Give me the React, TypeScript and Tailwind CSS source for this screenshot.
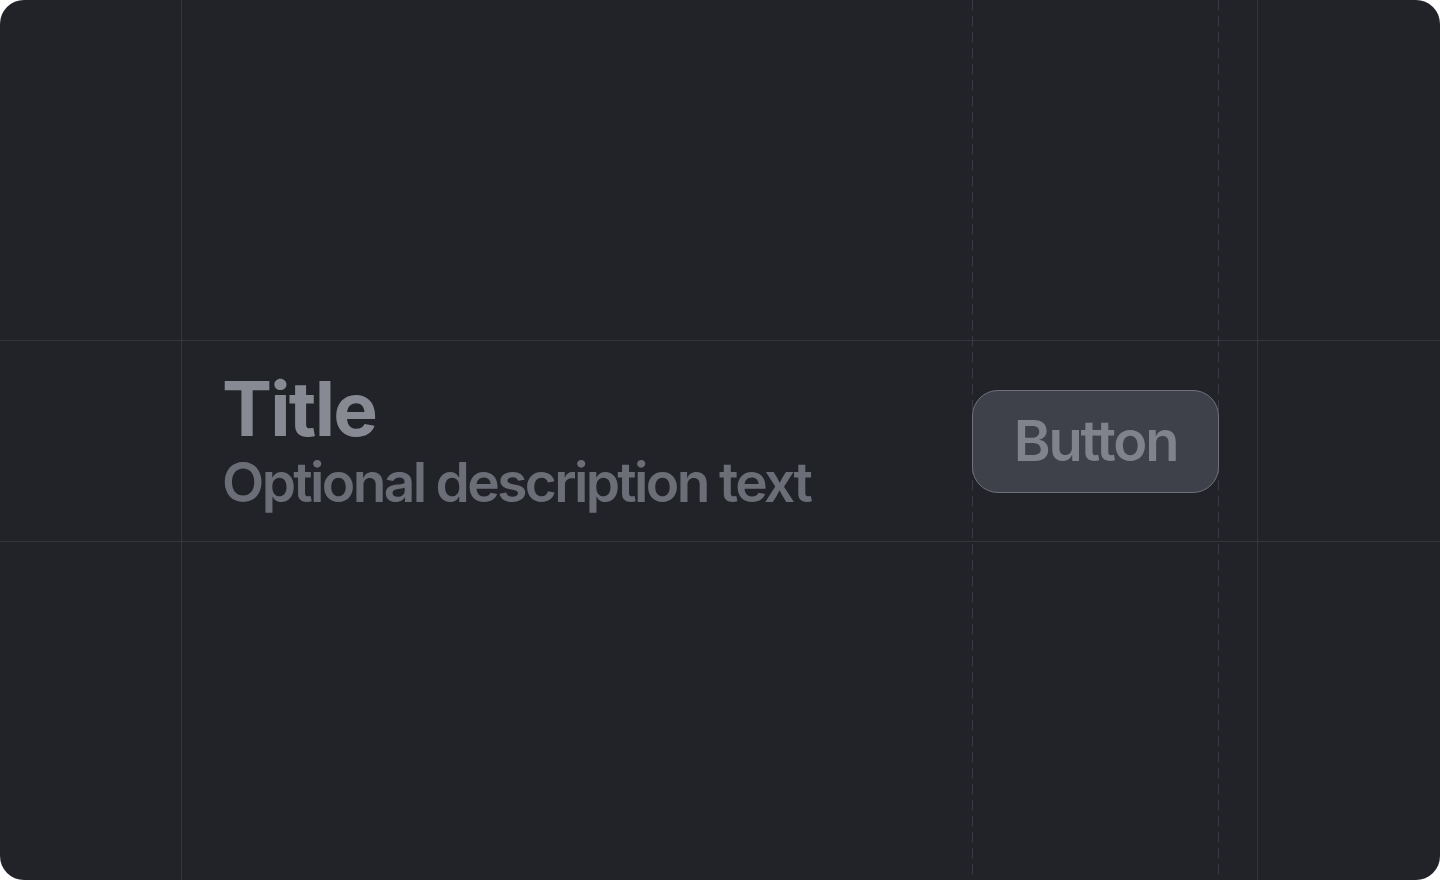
export default function App() {
  const line = "border-[#34363c]";

  return (
    <div className="h-[880px] w-[1440px] bg-white font-['Inter','Liberation_Sans',sans-serif]">
      <div className="relative grid h-full w-full grid-cols-[182px_1fr_183px] grid-rows-[341px_201px_1fr] overflow-hidden rounded-[24px] bg-[#222328]">
        {/* top row */}
        <div className={`border-r border-b ${line}`} />
        <div className={`border-b ${line}`} />
        <div className={`border-l border-b ${line}`} />

        {/* middle row */}
        <div className={`border-r border-b ${line}`} />
        <div className={`flex items-center justify-between border-b pl-[40px] pr-[38px] ${line}`}>
          <div className="flex flex-col pt-[6px]">
            <h1 className="text-[75px] leading-[76px] font-bold tracking-[-0.024em] text-[#878a92]">Title</h1>
            <p className="text-[55px] leading-[70px] font-semibold tracking-[-0.048em] text-[#6b6e77]">Optional description text</p>
          </div>
          <button className="relative z-10 flex h-[103px] w-[247px] items-center justify-center rounded-[26px] border-[1.5px] border-[#6e717a] bg-[#3e414a] text-[56px] font-semibold tracking-[-0.04em] text-[#80838c]">
            Button
          </button>
        </div>
        <div className={`border-l border-b ${line}`} />

        {/* bottom row */}
        <div className={`border-r ${line}`} />
        <div />
        <div className={`border-l ${line}`} />

        {/* dashed guides at the button edges */}
        <div className="pointer-events-none absolute inset-y-0 left-[972px] w-px bg-[repeating-linear-gradient(to_bottom,#3a3c43_0_10px,transparent_10px_16px)]" />
        <div className="pointer-events-none absolute inset-y-0 left-[1218px] w-px bg-[repeating-linear-gradient(to_bottom,#3a3c43_0_10px,transparent_10px_16px)]" />
      </div>
    </div>
  );
}
